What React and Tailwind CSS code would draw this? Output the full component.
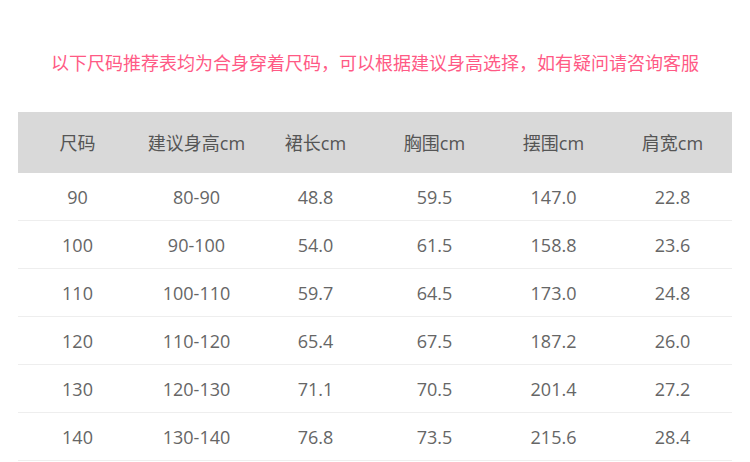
export default function App() {
  const headers = ["尺码", "建议身高cm", "裙长cm", "胸围cm", "摆围cm", "肩宽cm"];
  const rows = [
    ["90", "80-90", "48.8", "59.5", "147.0", "22.8"],
    ["100", "90-100", "54.0", "61.5", "158.8", "23.6"],
    ["110", "100-110", "59.7", "64.5", "173.0", "24.8"],
    ["120", "110-120", "65.4", "67.5", "187.2", "26.0"],
    ["130", "120-130", "71.1", "70.5", "201.4", "27.2"],
    ["140", "130-140", "76.8", "73.5", "215.6", "28.4"],
  ];
  return (
    <div
      className="w-[750px] h-[462px] bg-white overflow-hidden"
      style={{ fontFamily: '"Open Sans", "Noto Sans CJK SC", sans-serif' }}
    >
      <div className="pt-[51px] h-[112px]">
        <p className="text-center text-[18px] leading-[24px] text-[#ff5a85]">
          以下尺码推荐表均为合身穿着尺码，可以根据建议身高选择，如有疑问请咨询客服
        </p>
      </div>
      <div className="ml-[18px] w-[714px]">
        <div className="grid grid-cols-6 h-[61px] pt-[2px] bg-[#d9d9d9] items-center text-[18px] text-[#555]">
          {headers.map((h) => (
            <div key={h} className="text-center">{h}</div>
          ))}
        </div>
        {rows.map((r, i) => (
          <div
            key={i}
            className="grid grid-cols-6 h-[48px] pt-[2px] border-b border-[#eeeeee] items-center text-[18px] text-[#666]"
          >
            {r.map((c, j) => (
              <div key={j} className="text-center">{c}</div>
            ))}
          </div>
        ))}
      </div>
    </div>
  );
}
